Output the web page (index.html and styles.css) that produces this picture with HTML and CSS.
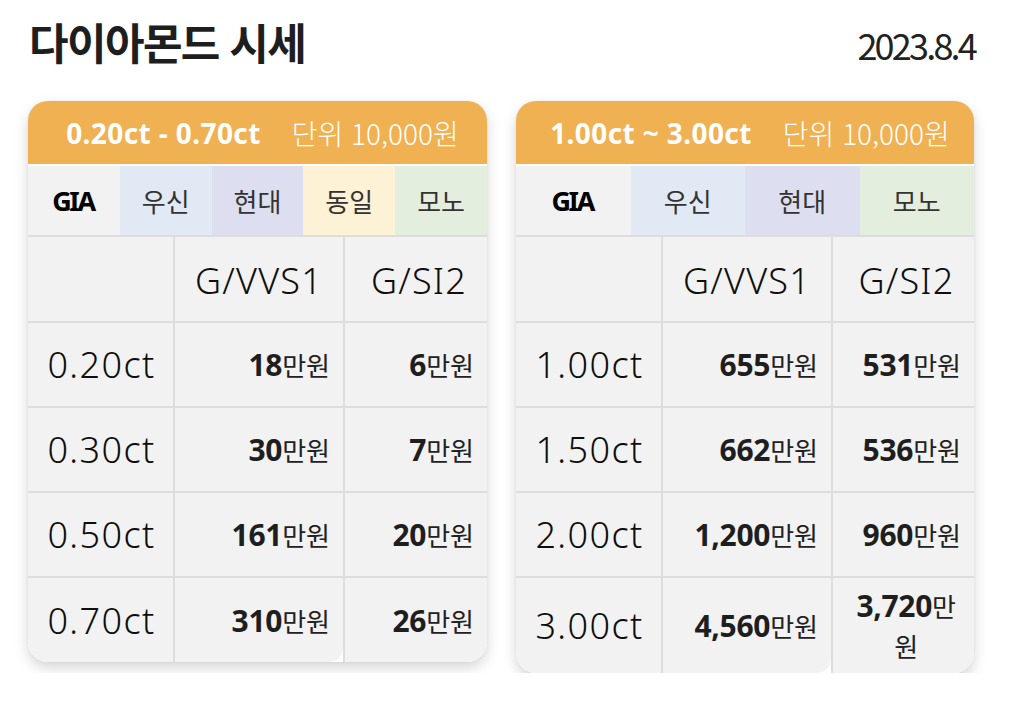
FILE: index.html
```html
<!DOCTYPE html>
<html lang="ko">
<head>
<meta charset="utf-8">
<title>다이아몬드 시세</title>
<link rel="stylesheet" href="styles.css">
</head>
<body>
<div class="page">
  <header class="top">
    <h1 class="title">다이아몬드 시세</h1>
    <div class="date">2023.8.4</div>
  </header>
  <div class="cards">
    <section class="card card-left">
      <div class="card-head"><b class="range">0.20ct - 0.70ct</b><span class="unit">단위 10,000원</span></div>
      <div class="brands brands-5">
        <div class="brand gia">GIA</div>
        <div class="brand ws">우신</div>
        <div class="brand hd">현대</div>
        <div class="brand di">동일</div>
        <div class="brand mn">모노</div>
      </div>
      <div class="grid">
        <div class="row head"><div class="c c1"></div><div class="c c2 grade">G/VVS1</div><div class="c c3 grade">G/SI2</div></div>
        <div class="row"><div class="c c1 ct">0.20ct</div><div class="c c2 pr"><b>18</b>만원</div><div class="c c3 pr"><b>6</b>만원</div></div>
        <div class="row"><div class="c c1 ct">0.30ct</div><div class="c c2 pr"><b>30</b>만원</div><div class="c c3 pr"><b>7</b>만원</div></div>
        <div class="row"><div class="c c1 ct">0.50ct</div><div class="c c2 pr"><b>161</b>만원</div><div class="c c3 pr"><b>20</b>만원</div></div>
        <div class="row last"><div class="c c1 ct">0.70ct</div><div class="c c2 pr"><b>310</b>만원</div><div class="c c3 pr"><b>26</b>만원</div></div>
      </div>
    </section>
    <section class="card card-right">
      <div class="card-head"><b class="range">1.00ct ~ 3.00ct</b><span class="unit">단위 10,000원</span></div>
      <div class="brands brands-4">
        <div class="brand gia">GIA</div>
        <div class="brand ws">우신</div>
        <div class="brand hd">현대</div>
        <div class="brand mn">모노</div>
      </div>
      <div class="grid">
        <div class="row head"><div class="c c1"></div><div class="c c2 grade">G/VVS1</div><div class="c c3 grade">G/SI2</div></div>
        <div class="row"><div class="c c1 ct">1.00ct</div><div class="c c2 pr"><b>655</b>만원</div><div class="c c3 pr"><b>531</b>만원</div></div>
        <div class="row"><div class="c c1 ct">1.50ct</div><div class="c c2 pr"><b>662</b>만원</div><div class="c c3 pr"><b>536</b>만원</div></div>
        <div class="row"><div class="c c1 ct">2.00ct</div><div class="c c2 pr"><b>1,200</b>만원</div><div class="c c3 pr"><b>960</b>만원</div></div>
        <div class="row last tall"><div class="c c1 ct">3.00ct</div><div class="c c2 pr"><b>4,560</b>만원</div><div class="c c3 pr wrap"><span class="wrapbox"><b>3,720</b>만<br>원</span></div></div>
      </div>
    </section>
  </div>
</div>
</body>
</html>
```
FILE: styles.css
```css
* { box-sizing: border-box; }
html, body { margin: 0; padding: 0; background: #ffffff; }
body { font-family: "Noto Sans CJK KR", "Noto Sans", sans-serif; color: #222; }

.page { width: 1012px; padding: 12px 37px 0 28px; }

.top { display: flex; justify-content: space-between; align-items: baseline; padding-left: 1px; }
.title { margin: 0; font-size: 43px; font-weight: 700; letter-spacing: -1.6px; line-height: 58px; color: #1e1e1e; }
.date { font-size: 36px; letter-spacing: -2.8px; line-height: 48px; color: #222; }

.cards { display: flex; gap: 29px; margin-top: 31px; align-items: flex-start; }

.card {
  width: 459px;
  background: #f2f2f2;
  border-radius: 20px;
  overflow: hidden;
  box-shadow: 0 6px 14px rgba(0, 0, 0, 0.16), 0 0 3px rgba(0, 0, 0, 0.06);
}
.card-right { width: 458px; }

.card-head {
  height: 65px;
  background: #f0b153;
  color: #ffffff;
  display: flex;
  align-items: center;
  justify-content: center;
  gap: 31px;
  padding-left: 10px;
  border-bottom: 2px solid #ffffff;
}
.range { font-family: "Noto Sans", sans-serif; font-weight: 700; font-size: 28px; letter-spacing: 0.4px; }
.unit { font-weight: 300; font-size: 28px; letter-spacing: 0; }

.brands { display: grid; height: 71px; border-bottom: 2px solid #dddddd; }
.brands-5 { grid-template-columns: repeat(5, 1fr); }
.brands-4 { grid-template-columns: repeat(4, 1fr); }
.brand { display: flex; align-items: center; justify-content: center; font-size: 26px; color: #333; }
.gia { background: #f2f2f2; font-family: "Noto Sans", sans-serif; font-weight: 700; color: #000; letter-spacing: -2.4px; font-size: 27px; padding-right: 2px; }
.ws { background: #e1eaf4; }
.hd { background: #dddff0; }
.di { background: #fdf1d6; }
.mn { background: #e3eedf; }

.grid { background: #f2f2f2; }
.row { display: grid; grid-template-columns: 145px 170px 1fr; height: 85px; border-top: 2px solid #dddddd; }
.row.head { height: 84px; border-top: 0; }
.row.last { height: 86px; background: #ffffff; }
.row.tall { height: 97px; }

.c { display: flex; align-items: center; background: #f2f2f2; }
.c2, .c3 { border-left: 2px solid #dddddd; }
.row.last .c2 { border-bottom-right-radius: 14px; }

.grade { justify-content: center; font-family: "Noto Sans", sans-serif; font-weight: 300; font-size: 36px; letter-spacing: 1.2px; color: #0e0e0e; padding-top: 2px; }
.c3.grade { padding-left: 6px; }
.ct { justify-content: center; font-family: "Noto Sans", sans-serif; font-weight: 300; font-size: 36px; letter-spacing: 1.4px; color: #0e0e0e; padding-left: 2px; }

.pr { justify-content: flex-end; padding-right: 13px; font-size: 26px; color: #222; letter-spacing: 0; }
.pr b { font-family: "Noto Sans", sans-serif; font-size: 30px; font-weight: 700; letter-spacing: -0.3px; color: #1e1e1e; }
.pr.wrap { padding-right: 18px; }
.wrapbox { display: inline-block; text-align: center; line-height: 40px; }
```
